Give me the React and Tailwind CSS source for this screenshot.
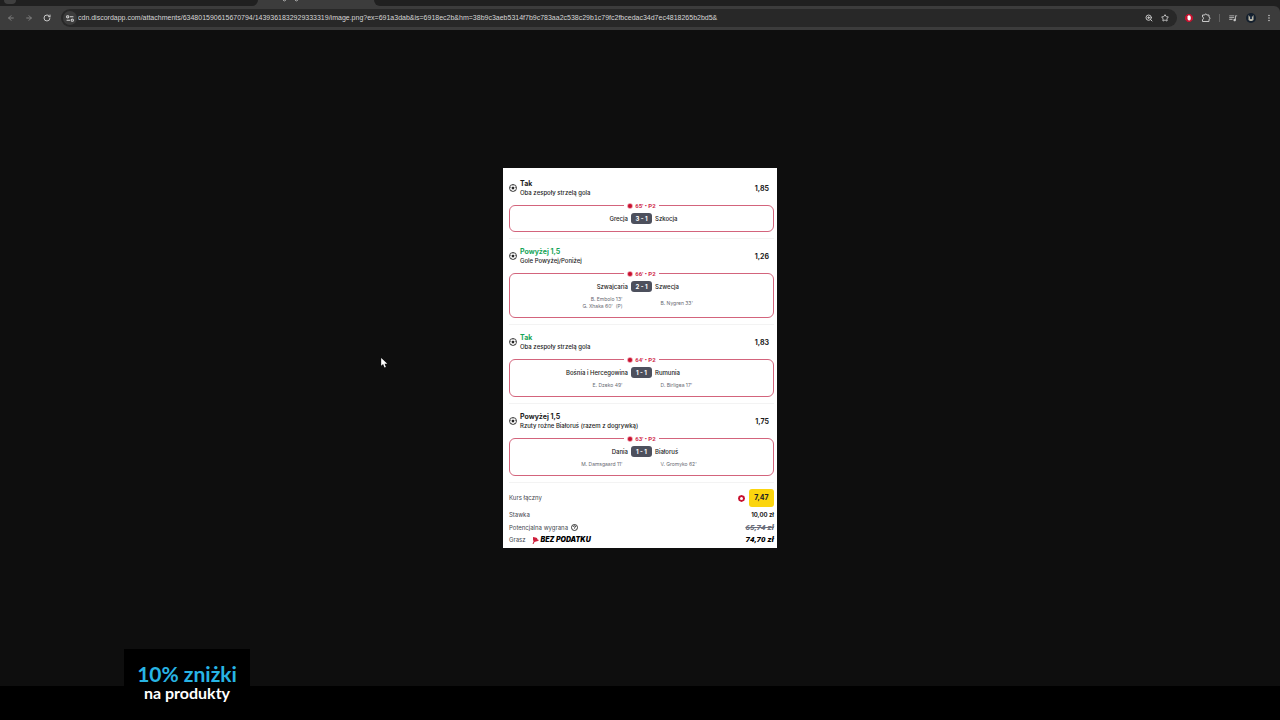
import { ArrowLeft, ArrowRight, RotateCw, Star, ZoomIn } from 'lucide-react'
import { MdMoreVert, MdQueueMusic } from 'react-icons/md'

const PAGE_URL =
  'cdn.discordapp.com/attachments/634801590615670794/1439361832929333319/image.png?ex=691a3dab&is=6918ec2b&hm=38b9c3aeb5314f7b9c783aa2c538c29b1c79fc2fbcedac34d7ec4818265b2bd5&'

const bets = [
  {
    pick: 'Tak',
    market: 'Oba zespoły strzelą gola',
    odds: '1,85',
    minute: "65'",
    home: 'Grecja',
    away: 'Szkocja',
    score: '3 - 1',
    homeScorers: [],
    awayScorers: [],
  },
  {
    pick: 'Powyżej 1,5',
    won: true,
    market: 'Gole Powyżej/Poniżej',
    odds: '1,26',
    minute: "66'",
    home: 'Szwajcaria',
    away: 'Szwecja',
    score: '2 - 1',
    homeScorers: ["B. Embolo 13'", "G. Xhaka 60'  (P)"],
    awayScorers: ["B. Nygren 33'"],
  },
  {
    pick: 'Tak',
    won: true,
    market: 'Oba zespoły strzelą gola',
    odds: '1,83',
    minute: "64'",
    home: 'Bośnia i Hercegowina',
    away: 'Rumunia',
    score: '1 - 1',
    homeScorers: ["E. Dzeko 49'"],
    awayScorers: ["D. Birligea 17'"],
  },
  {
    pick: 'Powyżej 1,5',
    market: 'Rzuty rożne Białoruś (razem z dogrywką)',
    odds: '1,75',
    minute: "63'",
    home: 'Dania',
    away: 'Białoruś',
    score: '1 - 1',
    homeScorers: ["M. Damsgaard 11'"],
    awayScorers: ["V. Gromyko 62'"],
  },
]

const BallIcon = () => (
  <svg viewBox="0 0 16 16" className="h-2 w-2 shrink-0" fill="none" stroke="#222" aria-hidden="true">
    <circle cx="8" cy="8" r="7" strokeWidth="1.6" />
    <path d="M8 4.8 11 7 9.9 10.6H6.1L5 7Z" fill="#222" stroke="none" />
    <path d="M8 1v2M1.5 6.5 3.2 7M14.5 6.5 12.8 7M4 13.6l1.2-1.8M12 13.6l-1.2-1.8" strokeWidth="1.6" />
  </svg>
)

const LiveDot = () => (
  <svg viewBox="0 0 12 12" className="h-1.5 w-1.5" aria-hidden="true">
    <circle cx="6" cy="6" r="5.5" fill="#e8899c" />
    <circle cx="6" cy="6" r="4" fill="#c8102e" />
  </svg>
)

const BrowserBar = () => (
  <header className="shrink-0 bg-[#202020]">
    {/* Tab strip, mostly scrolled out of view */}
    <div className="flex h-1.5 overflow-hidden bg-[#3c3c3c]">
      <div className="w-[258px] rounded-br-md bg-[#202020]">
        <div className="ml-1 h-1 w-3 rounded-b-full bg-[#3f3f3f]" />
      </div>
      <div className="flex w-[116px] justify-center">
        <svg viewBox="0 0 20 3" className="mr-12 h-[3px] w-5" fill="none" stroke="#aaa" aria-hidden="true">
          <path d="M1 0q1 2 3 0M13 0q1 2 3 0" />
        </svg>
      </div>
      <div className="flex-1 rounded-bl-md bg-[#202020]" />
    </div>
    <div className="flex h-6 items-center rounded-tr-md bg-[#3c3c3c] text-[#c7c7c7]">
      <nav className="flex w-[61px] items-center gap-2.5 pl-[7px]">
        <button aria-label="Wstecz" className="text-[#808080]">
          <ArrowLeft className="h-2 w-2" strokeWidth={3} />
        </button>
        <button aria-label="Dalej" className="text-[#808080]">
          <ArrowRight className="h-2 w-2" strokeWidth={3} />
        </button>
        <button aria-label="Odśwież">
          <RotateCw className="h-2 w-2" strokeWidth={3} />
        </button>
      </nav>
      <div className="flex h-[18px] flex-1 items-center rounded-full bg-[#282828] pr-2">
        <button
          aria-label="Informacje o witrynie"
          className="ml-0.5 flex h-3.5 w-3.5 items-center justify-center rounded-full bg-[#3c3c3c]"
        >
          <svg viewBox="0 0 14 12" className="h-[7px] w-2" fill="none" stroke="#d5d5d5" strokeWidth="1.8">
            <circle cx="3" cy="3" r="2" />
            <path d="M7 3h6M1 9h6" />
            <circle cx="11" cy="9" r="2" />
          </svg>
        </button>
        <input
          aria-label="Adres strony"
          defaultValue={PAGE_URL}
          className="min-w-0 flex-1 bg-transparent px-px font-['Liberation_Sans',sans-serif] text-[7px] text-[#d6d6d6] outline-none"
        />
        <div className="flex gap-2">
          <button aria-label="Powiększenie">
            <ZoomIn className="h-2 w-2" strokeWidth={3} />
          </button>
          <button aria-label="Dodaj do zakładek">
            <Star className="h-2 w-2" strokeWidth={3} />
          </button>
        </div>
      </div>
      <div className="flex items-center gap-2 pr-1.5 pl-2">
        <button aria-label="Adblock">
          <svg viewBox="0 0 16 16" className="h-2 w-2">
            <path d="M5 0h6l5 5v6l-5 5H5l-5-5V5Z" fill="#c4122f" />
            <path d="M5 6V4h1V3h1.500V2.500h1.500V3.500H10.500V5H11.500V10q-1 3-3 3t-3.500-3Z" fill="#fff" />
          </svg>
        </button>
        <button aria-label="Rozszerzenia">
          <svg viewBox="0 0 20 20" className="h-2.5 w-2.5" fill="none" stroke="currentColor" strokeWidth="2">
            <path d="M3 4h4.500q0-2 2-2t2 2H16v4.500q2 0 2 2t-2 2V17H3v-4q2 0 2-2.500T3 8Z" strokeLinejoin="round" />
          </svg>
        </button>
        <div className="h-2 w-px bg-[#606060]" />
        <button aria-label="Multimedia">
          <MdQueueMusic className="h-2.5 w-2.5" />
        </button>
        <button aria-label="Profil">
          <svg viewBox="0 0 20 20" className="h-2.5 w-2.5">
            <circle cx="10" cy="10" r="10" fill="#14202e" />
            <path d="M5 4l3 4h4l3-4v10l-3 2H8l-3-2Z" fill="#b9b6a6" />
            <path d="M8 7h4v5H8Z" fill="#26364d" />
          </svg>
        </button>
        <button aria-label="Menu">
          <MdMoreVert className="h-2.5 w-2.5" />
        </button>
      </div>
    </div>
  </header>
)

const Scorers = ({ names, className }) => (
  <ul className={`flex flex-1 flex-col justify-center text-[5px] leading-[7px] whitespace-pre text-[#666870] ${className}`}>
    {names.map(name => (
      <li key={name}>{name}</li>
    ))}
  </ul>
)

const Bet = ({ bet }) => (
  <article className="border-b border-[#f3f3f3] pt-2 pb-1.5 last-of-type:border-b-0">
    <div className="flex items-center pr-[5px]">
      <BallIcon />
      <div className="ml-[3px] flex-1">
        <h2 className={`text-[7px] leading-[10px] font-bold ${bet.won ? 'text-[#18a558]' : 'text-[#1c1c1c]'}`}>
          {bet.pick}
        </h2>
        <p className="text-[6px] leading-[8px] font-medium text-[#1c1c1c]">{bet.market}</p>
      </div>
      <span className="pt-0.5 text-[7px] leading-[10px] font-bold text-[#1c1c1c]">{bet.odds}</span>
    </div>

    {/* Live score */}
    <div className="relative mt-2 rounded-md border border-[#d3647c] py-[7px]">
      <div className="absolute inset-x-0 -top-1 flex justify-center">
        <span className="flex items-center gap-0.5 bg-white px-[3px] font-['Roboto',sans-serif] text-[6px] leading-[7px] font-bold text-[#cf2a4a]">
          <LiveDot />
          {bet.minute} • P2
        </span>
      </div>
      <div className="flex items-center gap-[3px] text-[6px] leading-[11px] font-medium text-[#222]">
        <span className="flex-1 text-right">{bet.home}</span>
        <span className="w-[21px] rounded-[3px] bg-[#4d505d] text-center font-bold text-white">{bet.score}</span>
        <span className="flex-1">{bet.away}</span>
      </div>
      {bet.homeScorers.length > 0 && (
        <div className="mt-1 flex">
          <Scorers names={bet.homeScorers} className="pr-[19px] text-right" />
          <Scorers names={bet.awayScorers} className="pl-[19px]" />
        </div>
      )}
    </div>
  </article>
)

const Summary = () => (
  <dl className="border-t border-[#f3f3f3] pt-1.5 pb-0.5 text-[6px] leading-3 text-[#44464e]">
    <div className="mb-0.5 flex items-center justify-between">
      <dt>Kurs łączny</dt>
      <dd className="flex items-center gap-1">
        <svg viewBox="0 0 14 14" className="h-[7px] w-[7px]" aria-hidden="true">
          <path d="M7 0 12.500 2 14 7 12.500 11.500 7 14 1.500 11.500 0 7 1.500 2Z" fill="#c8102e" />
          <circle cx="7" cy="7" r="3" fill="#fff" />
        </svg>
        <span className="w-[25px] rounded-[3px] bg-[#fbd50e] text-center text-[7px] leading-[18px] font-bold text-[#222]">
          7,47
        </span>
      </dd>
    </div>
    <div className="flex items-center justify-between">
      <dt>Stawka</dt>
      <dd className="font-bold text-[#1c1c1c]">10,00 zł</dd>
    </div>
    <div className="flex h-[13px] items-center justify-between">
      <dt className="flex items-center gap-[3px]">
        Potencjalna wygrana
        <button aria-label="Więcej informacji">
          <svg viewBox="0 0 14 14" className="h-[7px] w-[7px]" fill="none" stroke="#222" strokeWidth="1.8">
            <circle cx="7" cy="7" r="6" />
            <path d="M5 5.500q0-2 2-2t2 2q0 1-2 2v1.500" />
          </svg>
        </button>
      </dt>
      <dd className="font-['Roboto',sans-serif] text-[8px] font-black text-[#6b6e7b] italic line-through">65,74 zł</dd>
    </div>
    <div className="flex items-center justify-between">
      <dt className="flex items-center">
        Grasz
        <svg viewBox="0 0 14 14" className="ml-1.5 h-[7px] w-[7px]" aria-hidden="true">
          <path d="M2 0 7 1 10 2 11 5 14 6 12 8 8 9 5 10 3 14 1 14 3 9 2 5Z" fill="#cf1f3c" />
        </svg>
        <span className="ml-0.5 text-[7px] font-black text-black italic">BEZ PODATKU</span>
      </dt>
      <dd className="font-['Roboto',sans-serif] text-[8px] font-black text-black italic">74,70 zł</dd>
    </div>
  </dl>
)

const App = () => {
  return (
    <div className="flex min-h-screen flex-col bg-[#0e0e0e]">
      <BrowserBar />

      <main className="relative flex flex-1 items-center justify-center">
        <section className="w-[274px] bg-white pt-[3px] pr-[3px] pl-1.5 font-['Inter',sans-serif]">
          {bets.map(bet => (
            <Bet key={bet.minute} bet={bet} />
          ))}
          <Summary />
        </section>

        {/* Mouse pointer */}
        <svg viewBox="0 0 12 18" className="absolute top-[328px] left-[381px] h-[10px] w-[7px]" aria-hidden="true">
          <path d="M0 0V14L3.500 11 6 17 8.500 16 6 10.500H11Z" fill="#fff" />
        </svg>
      </main>

      <footer className="relative h-[34px] shrink-0 bg-black">
        <div className="absolute bottom-0 left-[124px] w-[126px] bg-black pt-3.5 pb-[19px] text-center font-['Lato',sans-serif] font-bold">
          <p className="text-[21px] leading-[22px] text-[#28b4e4]">10% zniżki</p>
          <p className="text-[16px] leading-4 text-white">na produkty</p>
        </div>
      </footer>
    </div>
  )
}

export default App
